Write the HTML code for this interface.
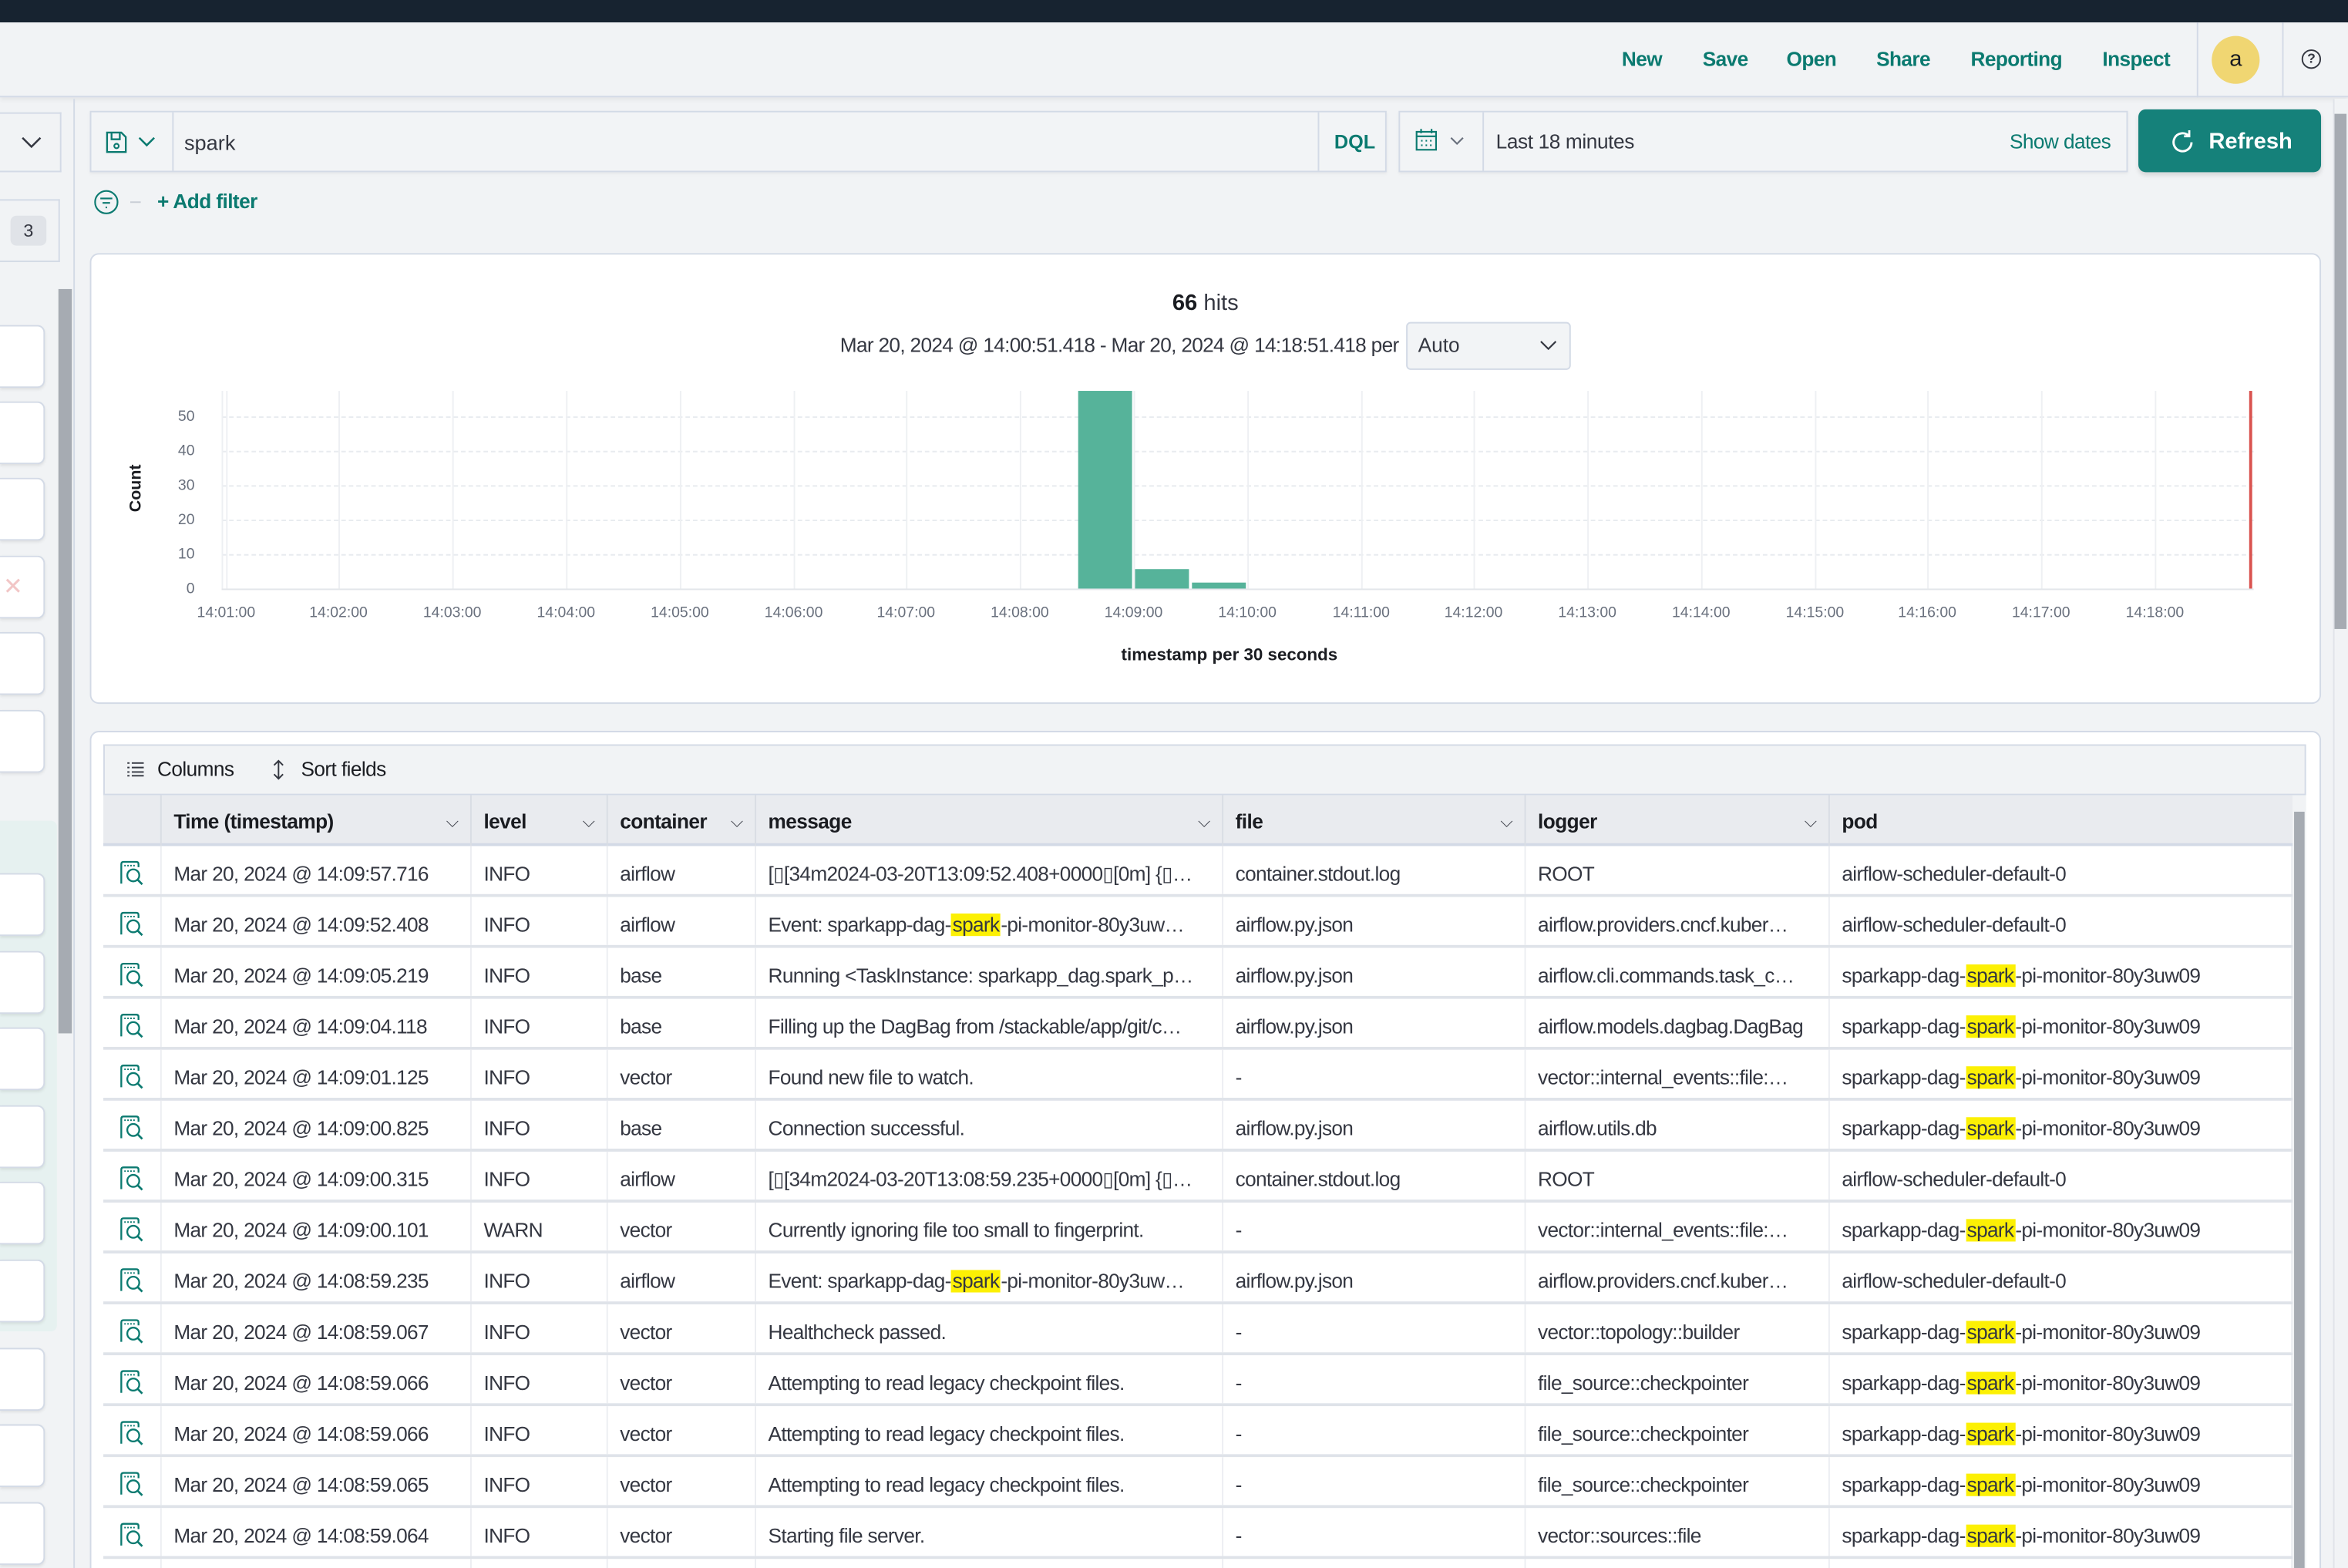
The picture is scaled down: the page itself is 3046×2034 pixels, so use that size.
<!DOCTYPE html>
<html><head><meta charset="utf-8">
<style>
*{box-sizing:border-box;margin:0;padding:0}
html,body{width:3046px;height:2034px;overflow:hidden;background:#f1f3f5}
#w{position:absolute;left:0;top:0;width:1568px;height:1047px;transform:scale(1.942602,1.942693);transform-origin:0 0;font-family:"Liberation Sans",sans-serif;color:#343741;background:#f1f3f5;overflow:hidden}
.a{position:absolute}
.t{color:#0b7a70}
.nav span{position:absolute;top:32px;font-size:13.5px;font-weight:bold;color:#0b7a70;letter-spacing:-0.3px}
.hdr{position:absolute;top:531px;height:34px;background:#e9ebef;border-bottom:2px solid #d3dae6;left:69px;width:1462px}
.hc{position:absolute;top:0;height:34px;line-height:36px;font-size:13.5px;font-weight:bold;color:#1a1c21;padding-left:8px;border-right:1px solid #d9dde4;letter-spacing:-0.3px}
.hc i{position:absolute;right:8px;top:0;font-style:normal;font-weight:normal;color:#343741;font-size:11px}
.row{position:absolute;left:69px;width:1462px;height:34px;background:#fff;border-bottom:2px solid #dfe3e9}
.c{position:absolute;top:0;height:32px;line-height:37px;font-size:13.5px;color:#343741;padding-left:8px;border-right:1px solid #eceef2;white-space:nowrap;overflow:hidden;letter-spacing:-0.35px}
.h{background:#fcf004;padding:0 1px}
.sb{position:absolute;left:0;width:30px;height:42px;background:#fff;border:1px solid #d3dae6;border-left:none;border-radius:0 5px 5px 0;box-shadow:0 1px 2px rgba(0,0,0,.08)}
.tick{position:absolute;top:404px;font-size:10px;color:#69707d;width:60px;margin-left:-30px;text-align:center}
.yl{position:absolute;left:100px;width:30px;text-align:right;font-size:10px;color:#69707d}
.gv{position:absolute;top:261px;height:132px;width:1px;background:#eef0f3}
.gh{position:absolute;left:148px;width:1357px;border-top:1px dashed #e8ebef}
</style></head><body><div id="w">
<div class="a" style="left:0;top:0;width:1568px;height:15px;background:#172330"></div>
<div class="a" style="left:0;top:15px;width:1568px;height:50px;background:#f1f3f5;border-bottom:1px solid #d3dae6;box-shadow:0 2px 3px rgba(0,0,0,.06)"></div>
<div class="nav">
<span style="left:1083px">New</span><span style="left:1137px">Save</span><span style="left:1193px">Open</span><span style="left:1253px">Share</span><span style="left:1316px">Reporting</span><span style="left:1404px">Inspect</span>
</div>
<div class="a" style="left:1467px;top:15px;width:1px;height:50px;background:#d3dae6"></div>
<div class="a" style="left:1477px;top:24px;width:32px;height:32px;border-radius:50%;background:#f0d672;text-align:center;line-height:31px;font-size:15px;color:#1a1c21">a</div>
<div class="a" style="left:1524px;top:15px;width:1px;height:50px;background:#d3dae6"></div>
<div class="a" style="left:1537px;top:33px;width:13px;height:13px;border:1.3px solid #343741;border-radius:50%;font-size:9px;text-align:center;line-height:11px;font-weight:bold">?</div>

<div class="a" style="left:49px;top:66px;width:1px;height:981px;background:#d3dae6"></div>
<div class="a" style="left:0;top:75px;width:41px;height:40px;background:#f1f3f5;border:1px solid #d3dae6;border-left:none"></div>
<svg class="a" style="left:14px;top:90px" width="14" height="10"><path d="M1 2 L7 8 L13 2" fill="none" stroke="#343741" stroke-width="1.3"/></svg>
<div class="a" style="left:0;top:133px;width:40px;height:42px;border:1px solid #d3dae6;border-left:none"></div>
<div class="a" style="left:7px;top:144px;width:24px;height:20px;background:#e0e3e8;border-radius:4px;font-size:12px;text-align:center;line-height:20px">3</div>
<div class="a" style="left:0;top:548px;width:38px;height:341px;background:#e6f1f0;border-radius:0 4px 4px 0"></div>
<div class="a" style="left:39px;top:186px;width:9px;height:861px;background:#f1f3f5"></div>
<div class="a" style="left:39px;top:193px;width:9px;height:497px;background:#a6abb2"></div>
<div class="sb" style="top:217px"></div><div class="sb" style="top:268px"></div><div class="sb" style="top:319px"></div><div class="sb" style="top:371px"><span style="position:absolute;left:2px;top:10px;color:#f2c6c6;font-size:16px">✕</span></div><div class="sb" style="top:422px"></div><div class="sb" style="top:474px"></div>
<div class="sb" style="top:583px"></div><div class="sb" style="top:635px"></div><div class="sb" style="top:686px"></div><div class="sb" style="top:738px"></div><div class="sb" style="top:789px"></div><div class="sb" style="top:841px"></div>
<div class="sb" style="top:900px"></div><div class="sb" style="top:951px"></div><div class="sb" style="top:1003px"></div>

<div class="a" style="left:60px;top:74px;width:866px;height:41px;border:1px solid #d3dae6;background:#f2f4f6;box-shadow:0 1px 2px rgba(0,0,0,.05)"></div>
<div class="a" style="left:115px;top:75px;width:1px;height:39px;background:#d3dae6"></div>
<svg class="a" style="left:70px;top:87px" width="36" height="16"><path d="M1.5 1.5 H11 L14 4.5 V14.5 H1.5 Z M4.5 1.5 V6 H10 V1.5" fill="none" stroke="#0b7a70" stroke-width="1.2"/><circle cx="7.8" cy="10.5" r="1.5" fill="none" stroke="#0b7a70" stroke-width="1.1"/><path d="M23 5 L28 10 L33 5" fill="none" stroke="#0b7a70" stroke-width="1.3"/></svg>
<div class="a" style="left:123px;top:87px;font-size:14px;color:#343741">spark</div>
<div class="a" style="left:880px;top:75px;width:1px;height:39px;background:#d3dae6"></div>
<div class="a t" style="left:891px;top:87px;font-size:13px;font-weight:bold">DQL</div>
<div class="a" style="left:934px;top:74px;width:487px;height:41px;border:1px solid #d3dae6;background:#f2f4f6;box-shadow:0 1px 2px rgba(0,0,0,.05)"></div>
<div class="a" style="left:990px;top:75px;width:1px;height:39px;background:#d3dae6"></div>
<svg class="a" style="left:945px;top:86px" width="36" height="16"><rect x="1" y="2" width="13" height="12" fill="none" stroke="#0b7a70" stroke-width="1.1"/><path d="M1 5 H14 M4 8 H5 M7 8 H8 M10 8 H11 M4 11 H5 M7 11 H8 M10 11 H11 M4 0 V3 M11 0 V3" stroke="#0b7a70" stroke-width="1.1"/><path d="M24 6 L28 10 L32 6" fill="none" stroke="#69707d" stroke-width="1.1"/></svg>
<div class="a" style="left:999px;top:87px;font-size:13.5px;color:#343741;letter-spacing:-0.2px">Last 18 minutes</div>
<div class="a t" style="left:1342px;top:87px;font-size:13.5px;letter-spacing:-0.3px">Show dates</div>
<div class="a" style="left:1428px;top:73px;width:122px;height:42px;background:#15817a;border-radius:5px;box-shadow:0 2px 3px rgba(0,0,0,.12)"></div>
<svg class="a" style="left:1450px;top:86px" width="16" height="18"><path d="M11.5 4.5 A6 6 0 1 0 13.5 9" fill="none" stroke="#fff" stroke-width="1.5"/><path d="M12 1 V5 H8.5" fill="none" stroke="#fff" stroke-width="1.4"/></svg>
<div class="a" style="left:1475px;top:86px;font-size:15px;font-weight:bold;color:#fff">Refresh</div>
<div class="a" style="left:1558px;top:66px;width:10px;height:981px;background:#f1f3f5;border-left:1px solid #e0e3e8"></div>
<div class="a" style="left:1559px;top:76px;width:8px;height:344px;background:#a6abb2"></div>

<svg class="a" style="left:62px;top:126px" width="40" height="18"><circle cx="9" cy="9" r="7.5" fill="none" stroke="#0b7a70" stroke-width="1.1"/><path d="M5 6.5 H13 M6.5 9.5 H11.5 M8.5 12.5 H9.5" stroke="#0b7a70" stroke-width="1.1"/><path d="M25 9 H32" stroke="#c9ced6" stroke-width="1"/></svg>
<div class="a t" style="left:105px;top:127px;font-size:13.5px;font-weight:bold;letter-spacing:-0.3px">+ Add filter</div>

<div class="a" style="left:60px;top:169px;width:1490px;height:301px;background:#fff;border:1px solid #d3dae6;border-radius:6px"></div>
<div class="a" style="left:700px;top:194px;width:210px;text-align:center;font-size:15px;color:#343741"><b style="color:#1a1c21">66</b> hits</div>
<div class="a" style="left:561px;top:223px;font-size:13.5px;color:#343741;letter-spacing:-0.35px">Mar 20, 2024 @ 14:00:51.418 - Mar 20, 2024 @ 14:18:51.418 per</div>
<div class="a" style="left:939px;top:215px;width:110px;height:32px;background:#f2f4f6;border:1px solid #d3dae6;border-radius:3px"></div>
<div class="a" style="left:947px;top:223px;font-size:13.5px">Auto</div>
<svg class="a" style="left:1028px;top:226px" width="12" height="10"><path d="M1 2 L6 7 L11 2" fill="none" stroke="#343741" stroke-width="1.1"/></svg>
<div class="gh" style="top:278px"></div><div class="gh" style="top:301px"></div><div class="gh" style="top:324px"></div><div class="gh" style="top:347px"></div><div class="gh" style="top:370px"></div>
<div class="gv" style="left:148px"></div><div class="gv" style="left:151px"></div><div class="gv" style="left:226px"></div><div class="gv" style="left:302px"></div><div class="gv" style="left:378px"></div><div class="gv" style="left:454px"></div><div class="gv" style="left:530px"></div><div class="gv" style="left:605px"></div><div class="gv" style="left:681px"></div><div class="gv" style="left:757px"></div><div class="gv" style="left:833px"></div><div class="gv" style="left:909px"></div><div class="gv" style="left:984px"></div><div class="gv" style="left:1060px"></div><div class="gv" style="left:1136px"></div><div class="gv" style="left:1212px"></div><div class="gv" style="left:1287px"></div><div class="gv" style="left:1363px"></div><div class="gv" style="left:1439px"></div>
<div class="a" style="left:148px;top:393px;width:1357px;height:1px;background:#e3e6ea"></div>
<div class="a" style="left:720px;top:261px;width:36px;height:132px;background:#56b39a"></div>
<div class="a" style="left:758px;top:380px;width:36px;height:13px;background:#56b39a"></div>
<div class="a" style="left:796px;top:389px;width:36px;height:4px;background:#56b39a"></div>
<div class="a" style="left:1502px;top:261px;width:2px;height:132px;background:#d9534f"></div>
<div class="yl" style="top:273px">50</div><div class="yl" style="top:296px">40</div><div class="yl" style="top:319px">30</div><div class="yl" style="top:342px">20</div><div class="yl" style="top:365px">10</div><div class="yl" style="top:388px">0</div>
<div class="a" style="left:68px;top:320px;width:46px;transform:rotate(-90deg);font-size:11px;font-weight:bold;color:#1a1c21;text-align:center">Count</div>
<div class="tick" style="left:151px">14:01:00</div><div class="tick" style="left:226px">14:02:00</div><div class="tick" style="left:302px">14:03:00</div><div class="tick" style="left:378px">14:04:00</div><div class="tick" style="left:454px">14:05:00</div><div class="tick" style="left:530px">14:06:00</div><div class="tick" style="left:605px">14:07:00</div><div class="tick" style="left:681px">14:08:00</div><div class="tick" style="left:757px">14:09:00</div><div class="tick" style="left:833px">14:10:00</div><div class="tick" style="left:909px">14:11:00</div><div class="tick" style="left:984px">14:12:00</div><div class="tick" style="left:1060px">14:13:00</div><div class="tick" style="left:1136px">14:14:00</div><div class="tick" style="left:1212px">14:15:00</div><div class="tick" style="left:1287px">14:16:00</div><div class="tick" style="left:1363px">14:17:00</div><div class="tick" style="left:1439px">14:18:00</div>
<div class="a" style="left:700px;top:432px;width:242px;text-align:center;font-size:11.5px;font-weight:bold;color:#1a1c21">timestamp per 30 seconds</div>

<div class="a" style="left:60px;top:488px;width:1490px;height:580px;background:#fff;border:1px solid #d3dae6;border-radius:6px"></div>
<div class="a" style="left:69px;top:497px;width:1471px;height:34px;background:#f1f3f5;border:1px solid #d3dae6"></div>
<svg class="a" style="left:85px;top:508px" width="12" height="11"><path d="M0 1.5 H1.5 M0 4.5 H1.5 M0 7.5 H1.5 M0 10 H1.5 M3 1.5 H11 M3 4.5 H11 M3 7.5 H11 M3 10 H11" stroke="#343741" stroke-width="1"/></svg>
<div class="a" style="left:105px;top:506px;font-size:13.5px;color:#1a1c21;letter-spacing:-0.3px">Columns</div>
<svg class="a" style="left:181px;top:507px" width="10" height="14"><path d="M2 4 L5 1 L8 4 M2 10 L5 13 L8 10 M5 1 V13" fill="none" stroke="#343741" stroke-width="1"/></svg>
<div class="a" style="left:201px;top:506px;font-size:13.5px;color:#1a1c21;letter-spacing:-0.3px">Sort fields</div>
<div class="a" style="left:1531px;top:531px;width:9px;height:520px;background:#f1f3f5"></div>
<div class="a" style="left:1532px;top:542px;width:7px;height:510px;background:#a6abb2"></div>

<div class="hdr">
<div class="hc" style="left:0;width:39px"></div>
<div class="hc" style="left:39px;width:207px">Time (timestamp)<i>⌵</i></div>
<div class="hc" style="left:246px;width:91px">level<i>⌵</i></div>
<div class="hc" style="left:337px;width:99px">container<i>⌵</i></div>
<div class="hc" style="left:436px;width:312px">message<i>⌵</i></div>
<div class="hc" style="left:748px;width:202px">file<i>⌵</i></div>
<div class="hc" style="left:950px;width:203px">logger<i>⌵</i></div>
<div class="hc" style="left:1153px;width:309px;border:none">pod</div>
</div>

<div id="rows"></div>
<script>
var R=[
["14:09:57.716","INFO","airflow","[▯[34m2024-03-20T13:09:52.408+0000▯[0m] {▯…","container.stdout.log","ROOT","airflow-scheduler-default-0"],
["14:09:52.408","INFO","airflow","Event: sparkapp-dag-<span class=h>spark</span>-pi-monitor-80y3uw…","airflow.py.json","airflow.providers.cncf.kuber…","airflow-scheduler-default-0"],
["14:09:05.219","INFO","base","Running &lt;TaskInstance: sparkapp_dag.spark_p…","airflow.py.json","airflow.cli.commands.task_c…","S"],
["14:09:04.118","INFO","base","Filling up the DagBag from /stackable/app/git/c…","airflow.py.json","airflow.models.dagbag.DagBag","S"],
["14:09:01.125","INFO","vector","Found new file to watch.","-","vector::internal_events::file:…","S"],
["14:09:00.825","INFO","base","Connection successful.","airflow.py.json","airflow.utils.db","S"],
["14:09:00.315","INFO","airflow","[▯[34m2024-03-20T13:08:59.235+0000▯[0m] {▯…","container.stdout.log","ROOT","airflow-scheduler-default-0"],
["14:09:00.101","WARN","vector","Currently ignoring file too small to fingerprint.","-","vector::internal_events::file:…","S"],
["14:08:59.235","INFO","airflow","Event: sparkapp-dag-<span class=h>spark</span>-pi-monitor-80y3uw…","airflow.py.json","airflow.providers.cncf.kuber…","airflow-scheduler-default-0"],
["14:08:59.067","INFO","vector","Healthcheck passed.","-","vector::topology::builder","S"],
["14:08:59.066","INFO","vector","Attempting to read legacy checkpoint files.","-","file_source::checkpointer","S"],
["14:08:59.066","INFO","vector","Attempting to read legacy checkpoint files.","-","file_source::checkpointer","S"],
["14:08:59.065","INFO","vector","Attempting to read legacy checkpoint files.","-","file_source::checkpointer","S"],
["14:08:59.064","INFO","vector","Starting file server.","-","vector::sources::file","S"],
["14:08:59.063","INFO","vector","Starting file server.","-","vector::sources::file","S"]];
var L=[[39,207],[246,91],[337,99],[436,312],[748,202],[950,203],[1153,309]];
var icon='<svg width="18" height="18" style="position:absolute;left:10px;top:9px"><path d="M2 16 V3 Q2 1.5 3.5 1.5 H12 Q13.5 1.5 13.5 3 V5" fill="none" stroke="#0b7a70" stroke-width="1.2"/><path d="M4 4 H12" stroke="#0b7a70" stroke-width="1" stroke-dasharray="1 1"/><circle cx="10" cy="10.5" r="4" fill="none" stroke="#0b7a70" stroke-width="1.2"/><path d="M13 13.5 L16 16.5" stroke="#0b7a70" stroke-width="1.4"/></svg>';
var h='';
for(var i=0;i<R.length;i++){var r=R[i];h+='<div class="row" style="top:'+(565+34*i)+'px"><div class="c" style="left:0;width:39px">'+icon+'</div>';
var v=['Mar 20, 2024 @ '+r[0],r[1],r[2],r[3],r[4],r[5],r[6]=="S"?'sparkapp-dag-<span class=h>spark</span>-pi-monitor-80y3uw09':r[6]];
for(var j=0;j<7;j++)h+='<div class="c" style="left:'+L[j][0]+'px;width:'+L[j][1]+'px">'+v[j]+'</div>';
h+='</div>';}
document.getElementById('rows').innerHTML=h;
</script>
</div></body></html>
